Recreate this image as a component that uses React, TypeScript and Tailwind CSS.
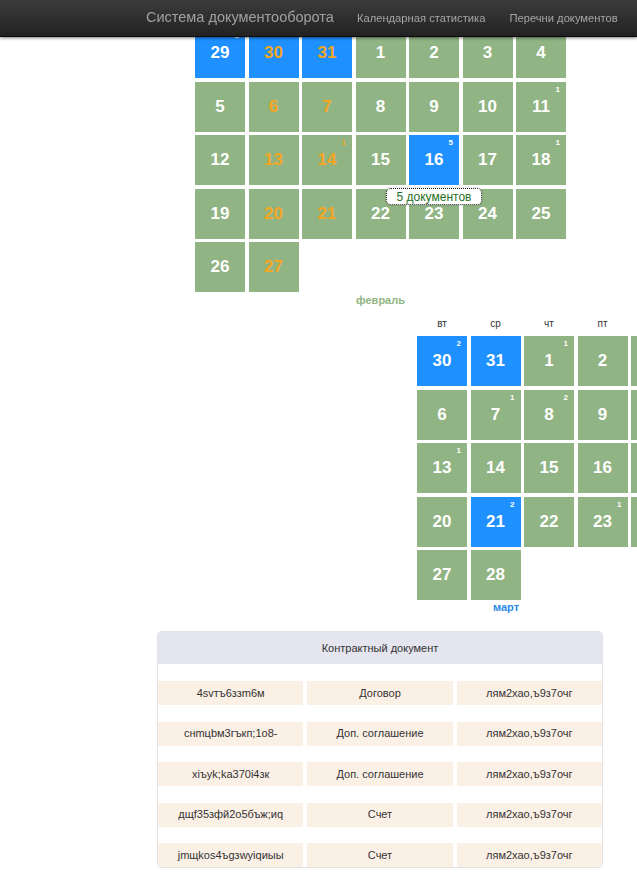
import React from 'react';

type Day = {
  n?: number;
  blue?: boolean;
  orange?: boolean;
  count?: number;
};

const feb: Day[][] = [
  [{ n: 29, blue: true, count: 1 }, { n: 30, blue: true, orange: true }, { n: 31, blue: true, orange: true }, { n: 1 }, { n: 2 }, { n: 3 }, { n: 4 }],
  [{ n: 5 }, { n: 6, orange: true }, { n: 7, orange: true }, { n: 8 }, { n: 9 }, { n: 10 }, { n: 11, count: 1 }],
  [{ n: 12 }, { n: 13, orange: true }, { n: 14, orange: true, count: 1 }, { n: 15 }, { n: 16, blue: true, count: 5 }, { n: 17 }, { n: 18, count: 1 }],
  [{ n: 19 }, { n: 20, orange: true }, { n: 21, orange: true }, { n: 22 }, { n: 23 }, { n: 24 }, { n: 25 }],
  [{ n: 26 }, { n: 27, orange: true }],
];

// пятая колонка уходит за край окна — видна только полоска
const mar: Day[][] = [
  [{ n: 30, blue: true, count: 2 }, { n: 31, blue: true }, { n: 1, count: 1 }, { n: 2 }, {}],
  [{ n: 6 }, { n: 7, count: 1 }, { n: 8, count: 2 }, { n: 9 }, {}],
  [{ n: 13, count: 1 }, { n: 14 }, { n: 15 }, { n: 16 }, {}],
  [{ n: 20 }, { n: 21, blue: true, count: 2 }, { n: 22 }, { n: 23, count: 1 }, {}],
  [{ n: 27 }, { n: 28 }],
];

const rows = [
  ['4svтъ6ззm6м', 'Договор', 'лям2хао,ъ9з7очг'],
  ['снmцbм3гъкп;1о8-', 'Доп. соглашение', 'лям2хао,ъ9з7очг'],
  ['xiъyk;ka370i4зк', 'Доп. соглашение', 'лям2хао,ъ9з7очг'],
  ['дщf35зфй2о5бъж;иq', 'Счет', 'лям2хао,ъ9з7очг'],
  ['jmщkos4ъgзwyiqиыы', 'Счет', 'лям2хао,ъ9з7очг'],
];

function Cell({ d }: { d: Day }) {
  return (
    <div
      className={`relative h-[50px] flex items-center justify-center text-[17px] font-bold ${
        d.blue ? 'bg-[#1e90ff]' : 'bg-[#90b483]'
      } ${d.orange ? 'text-[#f5a623]' : 'text-white'}`}
    >
      {d.n}
      {d.count ? (
        <span className="absolute top-[4px] right-[6px] text-[8px] leading-none font-bold">{d.count}</span>
      ) : null}
    </div>
  );
}

export default function App() {
  return (
    <div
      className="relative w-[637px] min-h-[883px] overflow-hidden bg-white"
      style={{ fontFamily: '"Liberation Sans", Arial, sans-serif' }}
    >
      <div className="fixed top-0 left-0 w-[637px] h-[37px] z-20 flex items-center bg-gradient-to-b from-[#3c3c3c] to-[#222] border-b border-[#080808] shadow-[0_1px_3px_rgba(0,0,0,0.5)]">
        <span className="ml-[146px] text-[14.5px] text-[#a0a0a0]">Система документооборота</span>
        <span className="ml-[23px] text-[11.2px] text-[#a5a5a5]">Календарная статистика</span>
        <span className="ml-[24px] text-[11.2px] text-[#a5a5a5]">Перечни документов</span>
      </div>

      <div className="pt-[28px]">
        {/* февраль */}
        <div className="relative ml-[195px] w-[371px]">
          <div className="grid grid-cols-[repeat(7,50px)] gap-[3.5px]">
            {feb.flatMap((r, i) => r.map((d, j) => <Cell key={`${i}-${j}`} d={d} />))}
          </div>
          <div className="mt-[1px] text-center text-[11px] leading-[14px] font-bold text-[#8fb582]">февраль</div>
          <div className="absolute left-[191px] top-[160px] w-[96px] h-[17px] flex items-center justify-center bg-white border border-dotted border-[#222] rounded-[5px] text-[12px] text-[#1f6f1f] shadow-[0_0_2px_rgba(0,0,0,0.3)]">
            5 документов
          </div>
        </div>

        {/* март */}
        <div className="ml-[417px] mt-[10px]">
          <div className="grid grid-cols-[repeat(4,50px)] gap-x-[3.5px] w-max">
            {['вт', 'ср', 'чт', 'пт'].map((w) => (
              <div key={w} className="text-center text-[10px] leading-[14px] text-[#333]">
                {w}
              </div>
            ))}
          </div>
          <div className="mt-[5px] grid grid-cols-[repeat(5,50px)] gap-[3.5px] w-max">
            {mar.flatMap((r, i) => r.map((d, j) => <Cell key={`${i}-${j}`} d={d} />))}
          </div>
          <div className="pl-[76px] text-[11px] leading-[14px] font-bold text-[#2a8ae8]">март</div>
        </div>

        {/* таблица */}
        <div className="ml-[157px] mt-[17px] w-[446px] border border-[#e2e2e2] rounded-[4px] bg-white overflow-hidden mb-[16px]">
          <div className="h-[32px] flex items-center justify-center bg-[#e4e5ee] text-[11px] text-[#333]">
            Контрактный документ
          </div>
          <div className="pt-[17px] flex flex-col gap-[16.5px]">
            {rows.map((r, i) => (
              <div key={i} className="grid grid-cols-3 gap-x-[4px]">
                {r.map((c, j) => (
                  <div key={j} className="h-[24px] flex items-center justify-center bg-[#fbf0e6] text-[11px] text-[#333]">
                    {c}
                  </div>
                ))}
              </div>
            ))}
          </div>
        </div>
      </div>
    </div>
  );
}
